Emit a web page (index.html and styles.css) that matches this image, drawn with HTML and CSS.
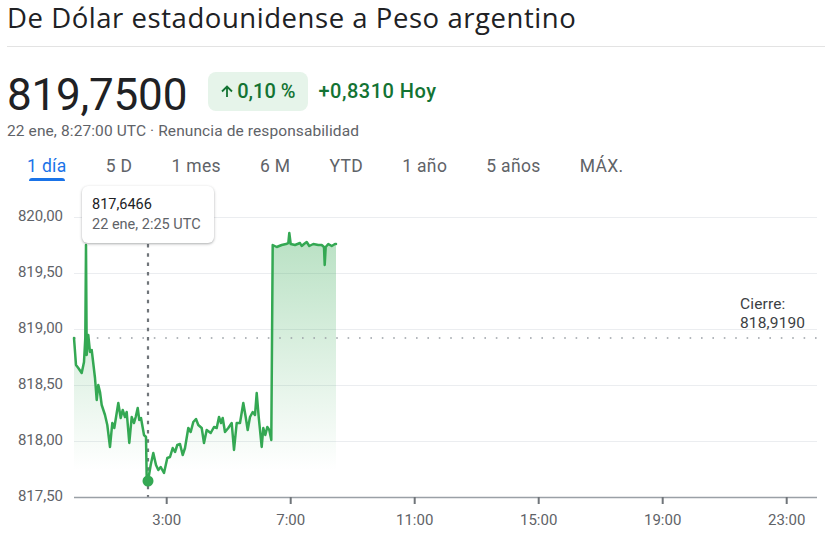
FILE: index.html
```html
<!DOCTYPE html>
<html lang="es">
<head>
<meta charset="utf-8">
<title>De Dólar estadounidense a Peso argentino</title>
<link rel="stylesheet" href="styles.css">
</head>
<body>
<div class="page">
  <h1 class="title">De Dólar estadounidense a Peso argentino</h1>
  <div class="divider"></div>
  <div class="price-row">
    <div class="price">819,7500</div>
    <div class="badge">
      <svg class="arrow" viewBox="0 0 14 14" width="14" height="14"><path d="M7 13V2.5M2 7.5L7 2.5L12 7.5" fill="none" stroke="#137333" stroke-width="1.8"/></svg>
      <span>0,10 %</span>
    </div>
    <div class="change">+0,8310 Hoy</div>
  </div>
  <div class="stamp">22 ene, 8:27:00 UTC · Renuncia de responsabilidad</div>
  <div class="tabs">
    <div class="tab active">1 día</div>
    <div class="tab">5 D</div>
    <div class="tab">1 mes</div>
    <div class="tab">6 M</div>
    <div class="tab">YTD</div>
    <div class="tab">1 año</div>
    <div class="tab">5 años</div>
    <div class="tab">MÁX.</div>
  </div>
  <div class="chart">
    <svg class="plot" viewBox="0 186 825 357" width="825" height="357">
      <defs>
        <linearGradient id="fillg" gradientUnits="userSpaceOnUse" x1="0" y1="240" x2="0" y2="470">
          <stop offset="0" stop-color="#34a853" stop-opacity="0.34"/>
          <stop offset="1" stop-color="#34a853" stop-opacity="0"/>
        </linearGradient>
      </defs>
      <g stroke="#ebedf0" stroke-width="1">
        <line x1="74" y1="217.5" x2="817" y2="217.5"/>
        <line x1="74" y1="273.5" x2="817" y2="273.5"/>
        <line x1="74" y1="329.5" x2="817" y2="329.5"/>
        <line x1="74" y1="385.5" x2="817" y2="385.5"/>
        <line x1="74" y1="441.5" x2="817" y2="441.5"/>
      </g>
      <path fill="url(#fillg)" d="M74,338 L76,365 L78.3,368 L81.7,373 L84,362 L85.3,338 L86,245 L86.7,355 L88.3,335 L90,352 L91.7,350 L95,378 L96.7,400 L98.3,385 L100,392 L101.7,405 L105,415 L107.3,425 L110,447 L112.3,423 L114.3,428 L118.3,403 L120.7,418 L122.7,410 L125,417 L126.7,412 L129.3,443 L131.7,417 L134,423 L135.7,417 L137.7,408 L139.3,420 L141,418 L144,435 L146,437 L146.7,478 L148,481 L150.7,465 L153.3,453 L156,465 L158.3,470 L160.7,467 L164,473 L167.3,458 L170,457 L172.7,448 L175,452 L177.3,445 L180,444 L182.7,455 L185,448 L188.3,428 L190.7,432 L193.3,422 L196,419 L198.3,425 L201.7,428 L204,443 L206.7,430 L210.7,433 L214,427 L216.7,428 L219,417 L221,423 L222.7,418 L225,432 L228.3,428 L231.7,423 L234,450 L236.7,423 L240,423 L243.3,403 L245.7,417 L247.7,430 L250,417 L252.7,412 L255,415 L256.7,393 L258.7,417 L260,430 L261.7,447 L263.3,428 L265.3,435 L267.3,427 L269.3,430 L271.3,440 L272.7,245 L276.7,247 L281.7,245 L286,244 L288.3,243 L289.3,233 L290.7,244 L295,245 L300,243 L301.7,246 L304,244 L306.7,242 L309.3,246 L313.3,244 L318.3,245 L321.7,245 L324,247 L324.7,265 L325.7,247 L328.3,244 L331.7,246 L335,244 L336,244 L336,497 L74,497 Z"/>
      <line x1="74" y1="338" x2="817" y2="338" stroke="#9aa0a6" stroke-width="1.6" stroke-dasharray="1.6 9.8" stroke-linecap="butt"/>
      <line x1="148" y1="244" x2="148" y2="497" stroke="#70757a" stroke-width="2.2" stroke-dasharray="3.5 5.8"/>
      <line x1="74" y1="497.5" x2="817" y2="497.5" stroke="#9aa0a6" stroke-width="1.5"/>
      <g stroke="#70757a" stroke-width="2">
        <line x1="166.7" y1="497" x2="166.7" y2="504"/>
        <line x1="290.7" y1="497" x2="290.7" y2="504"/>
        <line x1="414.7" y1="497" x2="414.7" y2="504"/>
        <line x1="538.7" y1="497" x2="538.7" y2="504"/>
        <line x1="662.7" y1="497" x2="662.7" y2="504"/>
        <line x1="786.7" y1="497" x2="786.7" y2="504"/>
      </g>
      <path fill="none" stroke="#34a853" stroke-width="2.5" stroke-linejoin="round" stroke-linecap="round" d="M74,338 L76,365 L78.3,368 L81.7,373 L84,362 L85.3,338 L86,245 L86.7,355 L88.3,335 L90,352 L91.7,350 L95,378 L96.7,400 L98.3,385 L100,392 L101.7,405 L105,415 L107.3,425 L110,447 L112.3,423 L114.3,428 L118.3,403 L120.7,418 L122.7,410 L125,417 L126.7,412 L129.3,443 L131.7,417 L134,423 L135.7,417 L137.7,408 L139.3,420 L141,418 L144,435 L146,437 L146.7,478 L148,481 L150.7,465 L153.3,453 L156,465 L158.3,470 L160.7,467 L164,473 L167.3,458 L170,457 L172.7,448 L175,452 L177.3,445 L180,444 L182.7,455 L185,448 L188.3,428 L190.7,432 L193.3,422 L196,419 L198.3,425 L201.7,428 L204,443 L206.7,430 L210.7,433 L214,427 L216.7,428 L219,417 L221,423 L222.7,418 L225,432 L228.3,428 L231.7,423 L234,450 L236.7,423 L240,423 L243.3,403 L245.7,417 L247.7,430 L250,417 L252.7,412 L255,415 L256.7,393 L258.7,417 L260,430 L261.7,447 L263.3,428 L265.3,435 L267.3,427 L269.3,430 L271.3,440 L272.7,245 L276.7,247 L281.7,245 L286,244 L288.3,243 L289.3,233 L290.7,244 L295,245 L300,243 L301.7,246 L304,244 L306.7,242 L309.3,246 L313.3,244 L318.3,245 L321.7,245 L324,247 L324.7,265 L325.7,247 L328.3,244 L331.7,246 L335,244 L336,244"/>
      <circle cx="148" cy="481" r="5.5" fill="#34a853"/>
    </svg>
    <div class="ylabel" style="top:20px">820,00</div>
    <div class="ylabel" style="top:76px">819,50</div>
    <div class="ylabel" style="top:132px">819,00</div>
    <div class="ylabel" style="top:188px">818,50</div>
    <div class="ylabel" style="top:244px">818,00</div>
    <div class="ylabel" style="top:300px">817,50</div>
    <div class="xlabel" style="left:166.7px">3:00</div>
    <div class="xlabel" style="left:290.7px">7:00</div>
    <div class="xlabel" style="left:414.7px">11:00</div>
    <div class="xlabel" style="left:538.7px">15:00</div>
    <div class="xlabel" style="left:662.7px">19:00</div>
    <div class="xlabel" style="left:786.7px">23:00</div>
    <div class="close-label">Cierre:<br>818,9190</div>
    <div class="tooltip">
      <div class="tip-value">817,6466</div>
      <div class="tip-date">22 ene, 2:25 UTC</div>
    </div>
  </div>
</div>
</body>
</html>
```

FILE: styles.css
```css
html, body {
  margin: 0;
  padding: 0;
  background: #ffffff;
  overflow: hidden;
}
body {
  font-family: Roboto, "Liberation Sans", Arial, sans-serif;
  color: #202124;
  width: 825px;
  height: 543px;
}
.page {
  display: flex;
  flex-direction: column;
}
.title {
  margin: 0;
  padding-left: 7px;
  font-family: "Open Sans", Roboto, sans-serif;
  font-size: 27.5px;
  font-weight: 400;
  line-height: 36px;
  letter-spacing: 0.55px;
  color: #202124;
  white-space: nowrap;
}
.divider {
  margin-top: 10px;
  margin-left: 7px;
  height: 1px;
  background: #e3e3e3;
}
.price-row {
  margin-top: 22px;
  padding-left: 7px;
  display: flex;
  align-items: flex-start;
  height: 52px;
}
.price {
  font-size: 44px;
  line-height: 52px;
  color: #202124;
  letter-spacing: -0.2px;
}
.badge {
  margin-left: 21px;
  margin-top: 3px;
  height: 39px;
  line-height: 39px;
  padding: 0 13px 0 12px;
  background: #e6f4ea;
  border-radius: 8px;
  color: #137333;
  font-size: 20px;
  font-weight: 500;
  display: flex;
  align-items: center;
  gap: 3px;
}
.arrow {
  display: block;
  margin-top: -1px;
}
.change {
  margin-left: 10px;
  margin-top: 3px;
  line-height: 39px;
  font-size: 20px;
  font-weight: 500;
  letter-spacing: 0.5px;
  color: #137333;
}
.stamp {
  padding-left: 7px;
  font-size: 15.5px;
  line-height: 20px;
  letter-spacing: 0.1px;
  color: #5f6368;
}
.tabs {
  margin-top: 13px;
  padding-left: 27px;
  display: flex;
  gap: 39px;
  height: 28px;
}
.tab {
  position: relative;
  font-size: 17.5px;
  letter-spacing: 0.35px;
  line-height: 24px;
  padding-bottom: 4px;
  color: #5f6368;
  white-space: nowrap;
}
.tab.active {
  color: #1a73e8;
}
.tab.active::after {
  content: "";
  position: absolute;
  left: 2px;
  right: 2px;
  bottom: 1px;
  height: 3px;
  border-radius: 3px 3px 0 0;
  background: #1a73e8;
}
.chart {
  margin-top: 4px;
  position: relative;
  width: 825px;
  height: 357px;
}
.plot {
  position: absolute;
  left: 0;
  top: 0;
  display: block;
}
.ylabel {
  position: absolute;
  right: 762px;
  font-size: 15px;
  line-height: 20px;
  color: #5f6368;
  transform: translateY(-0.5px);
}
.xlabel {
  position: absolute;
  top: 324px;
  font-size: 15px;
  line-height: 20px;
  color: #5f6368;
  transform: translateX(-50%);
}
.close-label {
  position: absolute;
  left: 740px;
  top: 109px;
  font-size: 15.5px;
  line-height: 19px;
  letter-spacing: 0.15px;
  color: #3c4043;
}
.tooltip {
  position: absolute;
  left: 82px;
  top: 0;
  width: 132px;
  height: 57px;
  box-sizing: border-box;
  padding: 9px 0 0 10px;
  background: #ffffff;
  border-radius: 6px;
  box-shadow: 0 1px 3px rgba(60, 64, 67, 0.3), 0 1px 2px rgba(60, 64, 67, 0.15);
  font-size: 14.5px;
  line-height: 20px;
}
.tip-value {
  color: #202124;
}
.tip-date {
  color: #5f6368;
}
```
